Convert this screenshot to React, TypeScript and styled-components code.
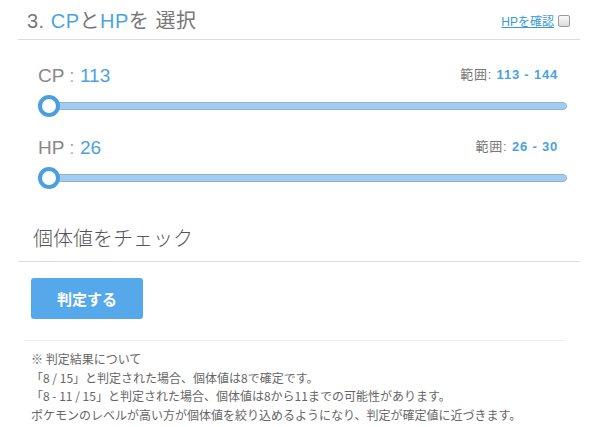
import React from "react";
import styled, { createGlobalStyle } from "styled-components";

const Global = createGlobalStyle`
  html, body { margin: 0; padding: 0; background: #fff; }
  body { font-family: "Liberation Sans", "Noto Sans CJK JP", sans-serif; color: #666; }
`;

const Page = styled.div`
  width: 591px;
  height: 427px;
  padding: 0 11px 0 18px;
  box-sizing: border-box;
  overflow: hidden;
`;

const HeaderRow = styled.div`
  height: 40px;
  border-bottom: 1px solid #dcdcdc;
  display: flex;
  justify-content: space-between;
  align-items: flex-start;
  padding: 5px 10px 0 9px;
  box-sizing: border-box;
`;

const Title = styled.h2`
  margin: 0;
  font-size: 20px;
  font-weight: normal;
  color: #777;
  letter-spacing: 0.5px;
  font-family: "Liberation Sans", "Noto Sans CJK JP", sans-serif;
`;

const Blue = styled.span<{ $bold?: boolean }>`
  color: #4aa3df;
  font-weight: ${(p) => (p.$bold ? "bold" : "normal")};
`;

const Confirm = styled.label`
  display: flex;
  align-items: center;
  gap: 4px;
  margin-top: 7px;
  font-size: 12px;
`;

const ConfirmLink = styled.a`
  color: #3a9ad6;
  text-decoration: underline;
`;

const Box = styled.span`
  width: 10px;
  height: 10px;
  border: 1px solid #999;
  border-radius: 2px;
  background: linear-gradient(#fafafa, #dcdcdc);
`;

const SliderGroup = styled.div`
  padding: 0 13px 0 20px;
  display: flex;
  flex-direction: column;
`;

const SliderBlock = styled.div<{ $top: number }>`
  margin-top: ${(p) => p.$top}px;
`;

const LabelRow = styled.div`
  display: flex;
  justify-content: space-between;
  align-items: center;
  padding-right: 9px;
`;

const Label = styled.div`
  font-size: 19px;
  color: #888;
`;

const Range = styled.div`
  font-size: 13px;
  color: #777;
  letter-spacing: 0.8px;
  margin-top: -5px;
`;

const Track = styled.div`
  position: relative;
  margin-top: 15px;
  margin-left: 2px;
  height: 6px;
  background: #a3cdf0;
  border: 1px solid #8fb2cf;
  border-radius: 4px;
`;

const Thumb = styled.div`
  position: absolute;
  left: -3px;
  top: 50%;
  width: 14px;
  height: 14px;
  margin-top: -11px;
  border: 4px solid #4a9fe0;
  border-radius: 50%;
  background: #fff;
`;

const CheckHeader = styled.div`
  margin-top: 32px;
  height: 48px;
  border-bottom: 1px solid #dcdcdc;
  padding-left: 15px;
  font-size: 20px;
  color: #555;
  font-family: "Noto Sans CJK JP", sans-serif;
  font-weight: 300;
  display: flex;
  align-items: center;
  box-sizing: border-box;
`;

const Judge = styled.button`
  margin: 16px 0 0 13px;
  width: 112px;
  height: 41px;
  border: none;
  border-radius: 3px;
  background: #55a9eb;
  color: #fff;
  font-size: 15px;
  font-weight: bold;
  font-family: "Noto Sans CJK JP", sans-serif;
  display: block;
`;

const Notes = styled.div`
  margin: 21px 15px 0 6px;
  border-top: 1px solid #f0f0f0;
  padding: 9px 0 0 7px;
  font-size: 12px;
  line-height: 18.7px;
  color: #666;
  font-family: "Noto Sans CJK JP", sans-serif;
`;

const Sep = styled.span`
  color: #aaa;
`;

function Slider({ name, value, min, max, top }: { name: string; value: number; min: number; max: number; top: number }) {
  return (
    <SliderBlock $top={top}>
      <LabelRow>
        <Label>
          {name} <Sep>:</Sep> <Blue>{value}</Blue>
        </Label>
        <Range>
          範囲: <Blue $bold>{min} - {max}</Blue>
        </Range>
      </LabelRow>
      <Track>
        <Thumb />
      </Track>
    </SliderBlock>
  );
}

export default function App() {
  return (
    <Page>
      <Global />
      <HeaderRow>
        <Title>
          3. <Blue>CP</Blue>と<Blue>HP</Blue>を 選択
        </Title>
        <Confirm>
          <ConfirmLink>HPを確認</ConfirmLink>
          <Box />
        </Confirm>
      </HeaderRow>
      <SliderGroup>
        <Slider name="CP" value={113} min={113} max={144} top={25} />
        <Slider name="HP" value={26} min={26} max={30} top={27} />
      </SliderGroup>
      <CheckHeader>個体値をチェック</CheckHeader>
      <Judge>判定する</Judge>
      <Notes>
        ※ 判定結果について
        <br />「8 / 15」と判定された場合、個体値は8で確定です。
        <br />「8 - 11 / 15」と判定された場合、個体値は8から11までの可能性があります。
        <br />ポケモンのレベルが高い方が個体値を絞り込めるようになり、判定が確定値に近づきます。
      </Notes>
    </Page>
  );
}
